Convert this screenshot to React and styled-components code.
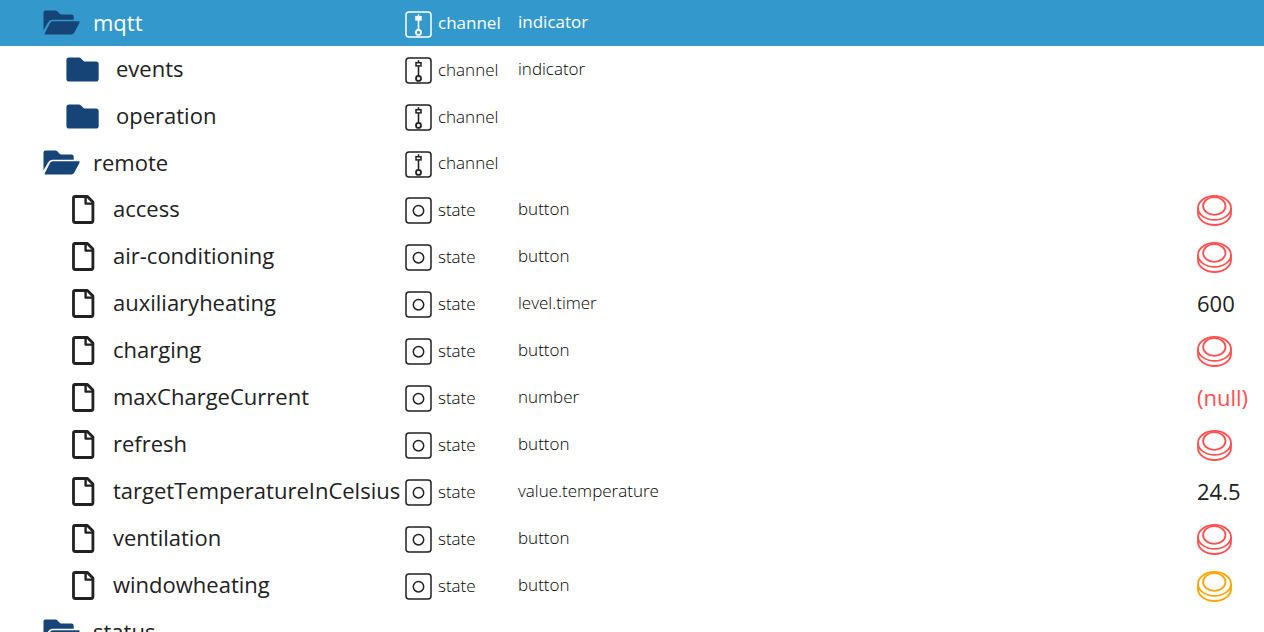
import styled, { createGlobalStyle } from "styled-components";

const objects = [
  { name: "mqtt", kind: "open", level: 1, type: "channel", role: "indicator", selected: true },
  { name: "events", kind: "closed", level: 2, type: "channel", role: "indicator" },
  { name: "operation", kind: "closed", level: 2, type: "channel" },
  { name: "remote", kind: "open", level: 1, type: "channel" },
  { name: "access", kind: "file", level: 2, type: "state", role: "button", button: "#ff5050" },
  { name: "air-conditioning", kind: "file", level: 2, type: "state", role: "button", button: "#ff5050" },
  { name: "auxiliaryheating", kind: "file", level: 2, type: "state", role: "level.timer", value: "600" },
  { name: "charging", kind: "file", level: 2, type: "state", role: "button", button: "#ff5050" },
  { name: "maxChargeCurrent", kind: "file", level: 2, type: "state", role: "number", value: "(null)", alert: true },
  { name: "refresh", kind: "file", level: 2, type: "state", role: "button", button: "#ff5050" },
  { name: "targetTemperatureInCelsius", kind: "file", level: 2, type: "state", role: "value.temperature", value: "24.5" },
  { name: "ventilation", kind: "file", level: 2, type: "state", role: "button", button: "#ff5050" },
  { name: "windowheating", kind: "file", level: 2, type: "state", role: "button", button: "#ffa500" },
  { name: "status", kind: "open", level: 1 },
];

function FolderOpen() {
  return (
    <svg width="37" height="25" viewBox="0 0 37 25" fill="#164477">
      <path d="M2.5 0.5H12.5Q13.5 0.5 14.3 1.3L16.6 3.7Q17.3 4.5 18.5 4.5H28.5Q30.7 4.5 30.7 6.7V9.7H9.5Q6.5 9.7 5 12.4L0.5 20.5V2.5Q0.5 0.5 2.5 0.5Z" />
      <path d="M9.6 11.3H35.7Q37.2 11.3 36.5 12.7L31.2 22.8Q30.3 24.6 28.3 24.6H2.6Q1.2 24.6 1.9 23.1L7 13Q7.9 11.3 9.6 11.3Z" />
    </svg>
  );
}

function FolderClosed() {
  return (
    <svg width="33" height="25" viewBox="0 0 33 25" fill="#164477">
      <path d="M3 0.5H13Q14 0.5 14.8 1.3L17 3.6Q17.8 4.5 19 4.5H30Q32.7 4.5 32.7 7.2V21.7Q32.7 24.5 30 24.5H3Q0.4 24.5 0.4 21.7V3.3Q0.4 0.5 3 0.5Z" />
    </svg>
  );
}

function FileIcon() {
  return (
    <svg width="23" height="29" viewBox="0 0 23 29" fill="none" stroke="#212121" strokeWidth="2.8" strokeLinejoin="round">
      <path d="M3.2 1.5H15.4L20.9 7V25.8Q20.9 27.5 19.2 27.5H3.2Q1.5 27.5 1.5 25.8V3.2Q1.5 1.5 3.2 1.5Z" />
      <path d="M13.6 1.5V8.6H20.9" strokeWidth="2.4" />
    </svg>
  );
}

function ChannelIcon({ filled }) {
  return (
    <svg width="27" height="27" viewBox="0 0 27 27" fill="none" stroke="currentColor" strokeWidth="1.5">
      <rect x="1" y="1" width="25" height="25" rx="3" />
      <path d="M13.5 3.2V6M13.5 9.2V18.5" strokeWidth="1.6" />
      <rect x="11" y="5.7" width="5" height="3.2" fill={filled ? "currentColor" : "none"} />
      <circle cx="13.5" cy="21.4" r="2.5" strokeWidth="1.8" />
    </svg>
  );
}

function StateIcon() {
  return (
    <svg width="27" height="27" viewBox="0 0 27 27" fill="none" stroke="currentColor" strokeWidth="1.5">
      <rect x="1" y="1" width="25" height="25" rx="3" />
      <circle cx="13.5" cy="13.7" r="5.2" />
    </svg>
  );
}

function PushIcon() {
  return (
    <svg width="35" height="31" viewBox="0 0 35 31" fill="none" stroke="currentColor" strokeWidth="1.8">
      <ellipse cx="17.3" cy="11" rx="11.2" ry="8.8" />
      <ellipse cx="17.5" cy="12.9" rx="16.5" ry="12" />
      <path d="M1 13V18C1 24.8 8.4 30 17.5 30S34 24.8 34 18V13" />
    </svg>
  );
}

const icons = { open: FolderOpen, closed: FolderClosed, file: FileIcon };

export default function App() {
  return (
    <>
      <GlobalStyle />
      <ViewportStyled>
        <TreeStyled>
          <colgroup>
            <col className="name" />
            <col className="type" />
            <col />
            <col className="value" />
          </colgroup>
          <tbody>
            {objects.map((item) => (
              <ObjectRow key={item.name} item={item} />
            ))}
          </tbody>
        </TreeStyled>
      </ViewportStyled>
    </>
  );
}

function ObjectRow({ item }) {
  const Icon = icons[item.kind];

  return (
    <RowStyled $selected={item.selected} $kind={item.kind}>
      <td>
        <NameStyled $level={item.level} $kind={item.kind}>
          <Icon />
          <LargeTextStyled>{item.name}</LargeTextStyled>
        </NameStyled>
      </td>
      <td>
        {item.type && (
          <TypeStyled>
            {item.type === "channel" ? <ChannelIcon filled={item.selected} /> : <StateIcon />}
            <SmallTextStyled $selected={item.selected}>{item.type}</SmallTextStyled>
          </TypeStyled>
        )}
      </td>
      <td>
        <SmallTextStyled $selected={item.selected}>{item.role}</SmallTextStyled>
      </td>
      <td>
        {item.button ? (
          <PushButtonStyled type="button" aria-label={item.name} $color={item.button}>
            <PushIcon />
          </PushButtonStyled>
        ) : (
          <LargeTextStyled $alert={item.alert}>{item.value}</LargeTextStyled>
        )}
      </td>
    </RowStyled>
  );
}

const GlobalStyle = createGlobalStyle`
  body {
    margin: 0;
    background: #ffffff;
    color: #212121;
    font-family: "Open Sans", "Noto Sans", sans-serif;
  }

  svg {
    display: block;
    flex-shrink: 0;
  }
`;

const ViewportStyled = styled.main`
  max-height: 100vh;
  overflow: hidden;
`;

const TreeStyled = styled.table`
  width: 100%;
  table-layout: fixed;
  border-collapse: collapse;

  td {
    padding: 0;
    vertical-align: middle;
  }

  .name {
    width: 405px;
  }

  .type {
    width: 113px;
  }

  .value {
    width: 67px;
  }
`;

const RowStyled = styled.tr`
  height: ${({ $kind }) => ($kind === "open" ? "46px" : "47px")};
  background: ${({ $selected }) => ($selected ? "#3399cc" : "transparent")};
  color: ${({ $selected }) => ($selected ? "#ffffff" : "inherit")};
`;

/* Files sit a bit deeper than folders, their icon is narrower */
const NameStyled = styled.div`
  display: flex;
  align-items: center;
  gap: ${({ $kind }) => ({ open: "13px", closed: "17px", file: "18px" })[$kind]};
  padding-bottom: 1px;
  padding-left: ${({ $level, $kind }) => 20 + $level * 23 + ($kind === "file" ? 6 : 0)}px;
`;

const TypeStyled = styled.div`
  display: flex;
  align-items: center;
  gap: 6px;
  padding-top: 2px;
`;

/* Light text gets a darker ink so it stays readable */
const SmallTextStyled = styled.span`
  display: block;
  padding-bottom: 2px;
  color: ${({ $selected }) => ($selected ? "inherit" : "#000000")};
  font-size: 17px;
  font-weight: ${({ $selected }) => ($selected ? 400 : 300)};
  line-height: 22px;
  white-space: nowrap;
`;

const LargeTextStyled = styled.span`
  display: block;
  padding-bottom: 2px;
  color: ${({ $alert }) => ($alert ? "#ff5050" : "inherit")};
  font-size: 22px;
  line-height: 30px;
  white-space: nowrap;
`;

const PushButtonStyled = styled.button`
  display: block;
  margin: 0;
  padding: 2px 0 0;
  border: none;
  background: none;
  color: ${({ $color }) => $color};
  cursor: pointer;
`;
